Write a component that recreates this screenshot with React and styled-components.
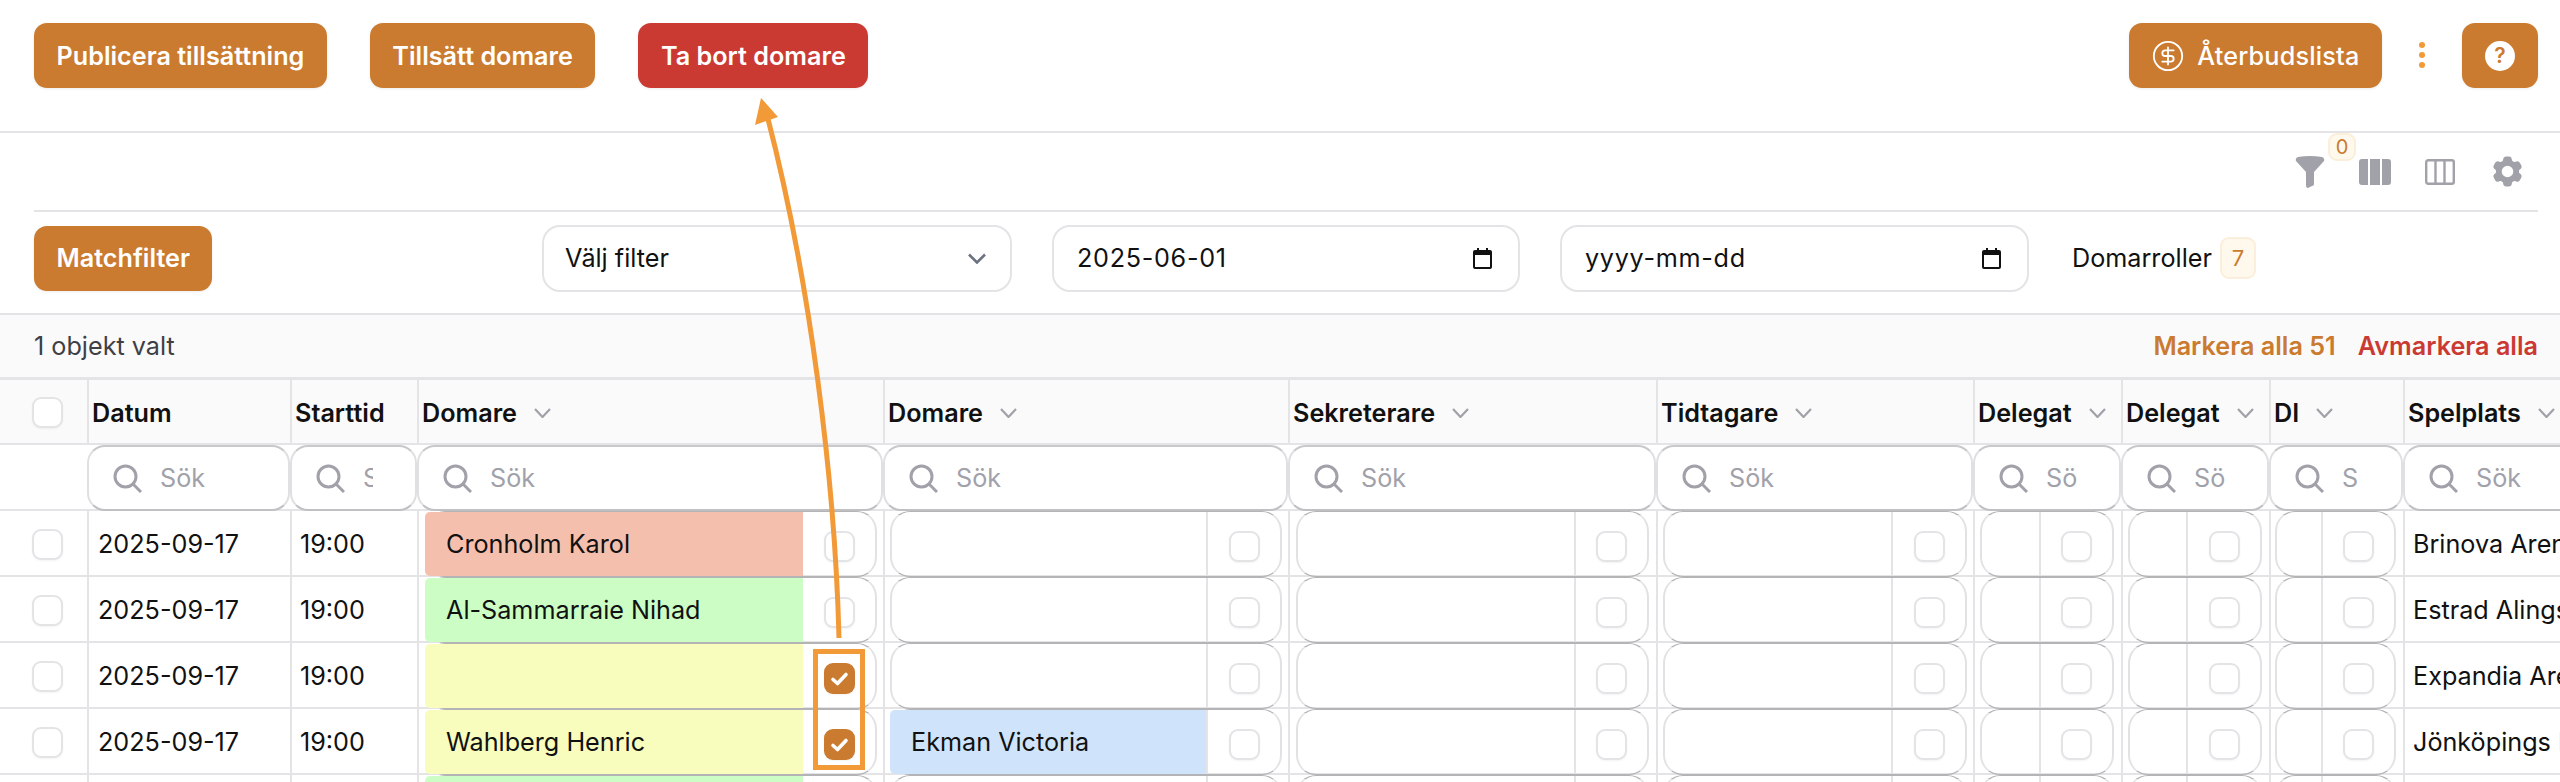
import React from "react";
import styled, { createGlobalStyle } from "styled-components";
import { CircleDollarSign } from "lucide-react";
import { HiCog6Tooth } from "react-icons/hi2";

const ORANGE = "#cb7b2f";
const RED = "#cb3a32";
const ACCENT = "#f29a38";
const LINE = "#e4e4e7";
const MUTED = "#a1a1aa";

const COLUMNS = "87px 203px 127px 466px 405px 368px 317px 148px 148px 134px 240px";

const GlobalStyle = createGlobalStyle`
  html, body {
    margin: 0;
    height: 782px;
    overflow: hidden;
    background: #fff;
    font-family: Inter, "Liberation Sans", sans-serif;
    font-size: 25.2px;
    color: #111;
  }
`;

const Page = styled.div`
  position: relative;
  width: 2560px;
  height: 782px;
  overflow: hidden;
`;

const TopBar = styled.div`
  display: flex;
  justify-content: space-between;
  height: 133px;
  padding: 23px 22px 0 34px;
  box-sizing: border-box;
  border-bottom: 2px solid ${LINE};
`;

const ButtonGroup = styled.div`
  display: flex;
  align-items: flex-start;
  gap: ${(p) => p.$gap}px;
`;

const Button = styled.button`
  display: flex;
  align-items: center;
  justify-content: center;
  gap: ${(p) => (p.$icon ? 12 : 0)}px;
  height: 65px;
  padding: 0 22.5px;
  border: 0;
  border-radius: 13px;
  background: ${(p) => (p.$danger ? RED : ORANGE)};
  color: #fff;
  font: ${(p) => (p.$medium ? 500 : 600)} 25.2px Inter, sans-serif;
  letter-spacing: ${(p) => (p.$medium ? "0.2px" : "0")};
  box-shadow: 0 1px 3px rgba(0, 0, 0, 0.08);
  white-space: nowrap;
`;

const HelpButton = styled(Button)`
  width: 76px;
  padding: 0;
`;

const Kebab = styled.span`
  display: flex;
  flex-direction: column;
  gap: 4px;
  margin: 19px 0 0;
  & > i {
    width: 6px;
    height: 6px;
    border-radius: 50%;
    background: ${ACCENT};
  }
`;

const ToolRow = styled.div`
  display: flex;
  justify-content: flex-end;
  align-items: center;
  gap: 34px;
  height: 79px;
  margin: 0 22px 0 34px;
  padding-right: 12px;
  box-sizing: border-box;
  border-bottom: 2px solid ${LINE};
  color: ${MUTED};
`;

const FilterTool = styled.span`
  position: relative;
  display: flex;
`;

const CountBadge = styled.span`
  display: flex;
  align-items: center;
  justify-content: center;
  box-sizing: border-box;
  border: 2px solid #fbeedb;
  border-radius: 9px;
  background: #fef9ec;
  color: ${ORANGE};
  font-weight: 400;
`;

const FilterCount = styled(CountBadge)`
  position: absolute;
  left: 33px;
  top: -23px;
  width: 28px;
  height: 28px;
  font-size: 20px;
`;

const RoleCount = styled(CountBadge)`
  width: 36px;
  height: 42px;
  font-size: 22px;
`;

const FilterRow = styled.div`
  display: grid;
  grid-template-columns: 468px 470px 468px 469px auto;
  column-gap: 40px;
  align-items: center;
  height: 101px;
  padding: 0 34px 9px;
  box-sizing: border-box;
`;

const MatchButton = styled(Button)`
  justify-self: start;
`;

const Field = styled.div`
  display: flex;
  align-items: center;
  justify-content: space-between;
  height: 67px;
  box-sizing: border-box;
  padding: 0 ${(p) => p.$right}px 0 ${(p) => p.$left}px;
  border: 2px solid ${LINE};
  border-radius: 18px;
  letter-spacing: ${(p) => (p.$date ? "0.7px" : "0")};
`;

const Roles = styled.div`
  display: flex;
  align-items: center;
  gap: 8px;
  margin-left: 3px;
`;

const SelectionBar = styled.div`
  display: flex;
  justify-content: space-between;
  align-items: center;
  height: 67px;
  box-sizing: border-box;
  padding: 0 22px 0 34px;
  border-top: 2px solid ${LINE};
  border-bottom: 3px solid ${LINE};
  background: #fafafa;
  color: #3f3f46;
`;

const BarLinks = styled.div`
  display: flex;
  gap: 22px;
  font-weight: 600;
`;

const BarLink = styled.span`
  color: ${(p) => (p.$danger ? RED : ORANGE)};
`;

const Row = styled.div`
  display: grid;
  grid-template-columns: ${COLUMNS};
  height: ${(p) => p.$height}px;
  background: ${(p) => (p.$head ? "#fafafa" : "#fff")};
  box-shadow: inset 0 -2px 0 ${LINE};
`;

const Cell = styled.div`
  display: flex;
  align-items: center;
  min-width: 0;
  overflow: hidden;
  white-space: nowrap;
  box-sizing: border-box;
  padding-left: ${(p) => p.$pad ?? 0}px;
  border-left: ${(p) => (p.$first ? "0" : `2px solid ${LINE}`)};
`;

const HeadCell = styled(Cell)`
  font-weight: 600;
  padding-left: 3px;
`;

const Chevron = styled.svg`
  flex: none;
  margin-left: 17px;
  color: ${MUTED};
`;

const Box = styled.span`
  flex: none;
  display: flex;
  align-items: center;
  justify-content: center;
  width: 31px;
  height: 31px;
  box-sizing: border-box;
  border: ${(p) => (p.$checked ? "0" : `2px solid ${LINE}`)};
  border-radius: 9px;
  background: ${(p) => (p.$checked ? ORANGE : "#fff")};
  box-shadow: 0 1px 2px rgba(0, 0, 0, 0.05);
`;

const SearchWrap = styled.label`
  display: flex;
  align-items: center;
  gap: 18px;
  min-width: 0;
  height: 66px;
  box-sizing: border-box;
  padding-left: 24px;
  border: 2px solid #e0e0e3;
  border-top-color: #c9c9cc;
  border-bottom-color: #c0c0c3;
  border-radius: 18px;
  color: ${MUTED};
  background: #fff;
`;

const SearchInput = styled.input`
  flex: 1;
  width: 0;
  min-width: 0;
  margin-right: 42px;
  padding: 0;
  border: 0;
  outline: 0;
  background: none;
  font: 400 25.2px Inter, sans-serif;
  &::placeholder {
    color: ${MUTED};
    opacity: 1;
  }
`;

const AssignCell = styled.div`
  flex: 1;
  min-width: 0;
  display: flex;
  height: 66px;
  box-sizing: border-box;
  margin: 0 ${(p) => p.$right}px 0 ${(p) => p.$left}px;
  border: 2px solid #e2e2e4;
  border-top: 1px solid #b4b4b6;
  border-bottom: 1px solid #b4b4b6;
  border-radius: 20px;
`;

const AssignName = styled.div`
  flex: 1;
  display: flex;
  align-items: center;
  min-width: 0;
  padding-left: 21px;
  margin-left: -2px;
  background: ${(p) => p.$fill || "transparent"};
  border-radius: ${(p) => (p.$fill ? "5px 0 0 5px" : "0")};
  white-space: nowrap;
`;

const AssignCheck = styled.div`
  flex: none;
  display: flex;
  align-items: center;
  justify-content: center;
  width: ${(p) => p.$width}px;
  box-sizing: border-box;
  padding-top: 4px;
  border-left: ${(p) => (p.$plain ? "0" : `2px solid ${LINE}`)};
`;

const Overlay = styled.svg`
  position: absolute;
  left: 0;
  top: 0;
  pointer-events: none;
`;

const ChevronIcon = () => (
  <Chevron width="17" height="10" viewBox="0 0 17 10" fill="none" stroke="currentColor" strokeWidth="2.2">
    <path d="M1 1l7.5 8L16 1" />
  </Chevron>
);

const SearchIcon = () => (
  <svg width="29" height="29" viewBox="0 0 29 29" fill="none" stroke="currentColor" strokeWidth="3" style={{ flex: "none" }}>
    <circle cx="12.5" cy="12.5" r="10.5" />
    <path d="M20.5 20.5L28 28" />
  </svg>
);

const CalendarIcon = () => (
  <svg width="19" height="21" viewBox="0 0 19 21" fill="#111">
    <path d="M4 0h2v2h7V0h2v2h2a2 2 0 0 1 2 2v15a2 2 0 0 1-2 2H2a2 2 0 0 1-2-2V4a2 2 0 0 1 2-2h2V0zM2 7v12h15V7H2z" />
  </svg>
);

const CheckMark = () => (
  <svg width="29" height="29" viewBox="0 0 29 29" fill="none" stroke="#fff" strokeWidth="3.6" strokeLinecap="round" strokeLinejoin="round">
    <path d="M8 15.5l4.5 4L21 10.5" />
  </svg>
);

const columns = [
  { title: "Datum" },
  { title: "Starttid" },
  { title: "Domare", sort: true },
  { title: "Domare", sort: true },
  { title: "Sekreterare", sort: true },
  { title: "Tidtagare", sort: true },
  { title: "Delegat", sort: true },
  { title: "Delegat", sort: true },
  { title: "DI", sort: true },
  { title: "Spelplats", sort: true },
];

// margins and check-part widths differ a little per assignment column
const assignColumns = [
  { name: 0, width: 72, left: 6, right: 6 },
  { name: 1, width: 74, left: 5, right: 6 },
  { width: 73, left: 6, right: 7 },
  { width: 74, left: 5, right: 6 },
  { width: 73, left: 5, right: 7 },
  { width: 74, left: 5, right: 7 },
  { width: 73, left: 4, right: 7 },
];

const rows = [
  { venue: "Brinova Arena", names: [["Cronholm Karol", "#f5bfad"], null] },
  { venue: "Estrad Alingsås", names: [["Al-Sammarraie Nihad", "#ccfdc4"], null] },
  { venue: "Expandia Arena", names: [["", "#f8fdbe"], null], checked: true },
  { venue: "Jönköpings Idrottshus", names: [["Wahlberg Henric", "#f8fdbe"], ["Ekman Victoria", "#cfe4fb"]], checked: true },
  { venue: "", date: "", names: [["", "#ccfdc4"], null] },
];

const App = () => (
  <Page>
    <GlobalStyle />
    <TopBar>
      <ButtonGroup $gap={43}>
        <Button>Publicera tillsättning</Button>
        <Button>Tillsätt domare</Button>
        <Button $danger>Ta bort domare</Button>
      </ButtonGroup>
      <ButtonGroup $gap={37}>
        <Button $icon $medium>
          <CircleDollarSign size={34} strokeWidth={1.3} />
          Återbudslista
        </Button>
        <Kebab>
          <i />
          <i />
          <i />
        </Kebab>
        <HelpButton>
          <svg width="30" height="30" viewBox="0 0 30 30">
            <circle cx="15" cy="15" r="15" fill="#fff" />
            <text x="15" y="22" textAnchor="middle" fontSize="21" fontWeight="600" fontFamily="Inter, sans-serif" fill={ORANGE}>?</text>
          </svg>
        </HelpButton>
      </ButtonGroup>
    </TopBar>

    <ToolRow>
      <FilterTool>
        <svg width="30" height="32" viewBox="0 0 30 32" fill="currentColor">
          <path d="M3 1Q15-1 27 1q3 1 2 4L19 16v12q0 2-2 2l-4 2q-2 0-2-3V16L1 5Q0 2 3 1z" />
        </svg>
        <FilterCount>0</FilterCount>
      </FilterTool>
      <svg width="32" height="26" viewBox="0 0 32 26" fill="currentColor">
        <path d="M3 0h6v26H3a3 3 0 0 1-3-3V3a3 3 0 0 1 3-3zM11 0h10v26H11zM23 0h6a3 3 0 0 1 3 3v20a3 3 0 0 1-3 3h-6z" />
      </svg>
      <svg width="30" height="26" viewBox="0 0 30 26" fill="none" stroke="currentColor" strokeWidth="2.4">
        <rect x="1.2" y="1.2" width="27.6" height="23.6" rx="2" />
        <path d="M10.5 1v24M19.5 1v24" />
      </svg>
      <HiCog6Tooth size={37} />
    </ToolRow>

    <FilterRow>
      <MatchButton>Matchfilter</MatchButton>
      <Field $left={21} $right={24}>
        Välj filter
        <svg width="18" height="11" viewBox="0 0 18 11" fill="none" stroke="#6b7280" strokeWidth="2.6">
          <path d="M1 1.5l8 8 8-8" />
        </svg>
      </Field>
      <Field $left={23} $right={26} $date>
        2025-06-01
        <CalendarIcon />
      </Field>
      <Field $left={23} $right={26} $date>
        yyyy-mm-dd
        <CalendarIcon />
      </Field>
      <Roles>
        Domarroller
        <RoleCount>7</RoleCount>
      </Roles>
    </FilterRow>

    <SelectionBar>
      <span>1 objekt valt</span>
      <BarLinks>
        <BarLink>Markera alla 51</BarLink>
        <BarLink $danger>Avmarkera alla</BarLink>
      </BarLinks>
    </SelectionBar>

    <Row $head $height={65}>
      <Cell $first $pad={32}>
        <Box />
      </Cell>
      {columns.map((c, i) => (
        <HeadCell key={i}>
          {c.title}
          {c.sort && <ChevronIcon />}
        </HeadCell>
      ))}
    </Row>

    <Row $height={66}>
      <Cell $first />
      {columns.map((c, i) => (
        <SearchWrap key={i}>
          <SearchIcon />
          <SearchInput placeholder="Sök" readOnly />
        </SearchWrap>
      ))}
    </Row>

    {rows.map((row, r) => (
      <Row key={r} $height={66}>
        <Cell $first $pad={32}>
          <Box />
        </Cell>
        <Cell $pad={9}>{row.date ?? "2025-09-17"}</Cell>
        <Cell $pad={8}>{row.date ?? "19:00"}</Cell>
        {assignColumns.map((col, c) => {
          const person = col.name !== undefined ? row.names[col.name] : null;
          const checked = c === 0 && row.checked;
          return (
            <Cell key={c}>
              <AssignCell $left={col.left} $right={col.right}>
                <AssignName $fill={person ? person[1] : null}>{person ? person[0] : ""}</AssignName>
                <AssignCheck $width={col.width} $plain={c === 0}>
                  <Box $checked={checked}>{checked && <CheckMark />}</Box>
                </AssignCheck>
              </AssignCell>
            </Cell>
          );
        })}
        <Cell $pad={8}>{row.venue}</Cell>
      </Row>
    ))}

    <Overlay width="2560" height="782" viewBox="0 0 2560 782" fill="none">
      <path d="M839 638C835 480 810 280 767 115" stroke={ACCENT} strokeWidth="5" />
      <path d="M761 98L755 125L778 117Z" fill={ACCENT} />
      <rect x="815.5" y="651.5" width="47" height="116" stroke={ACCENT} strokeWidth="5" />
    </Overlay>
  </Page>
);

export default App;
